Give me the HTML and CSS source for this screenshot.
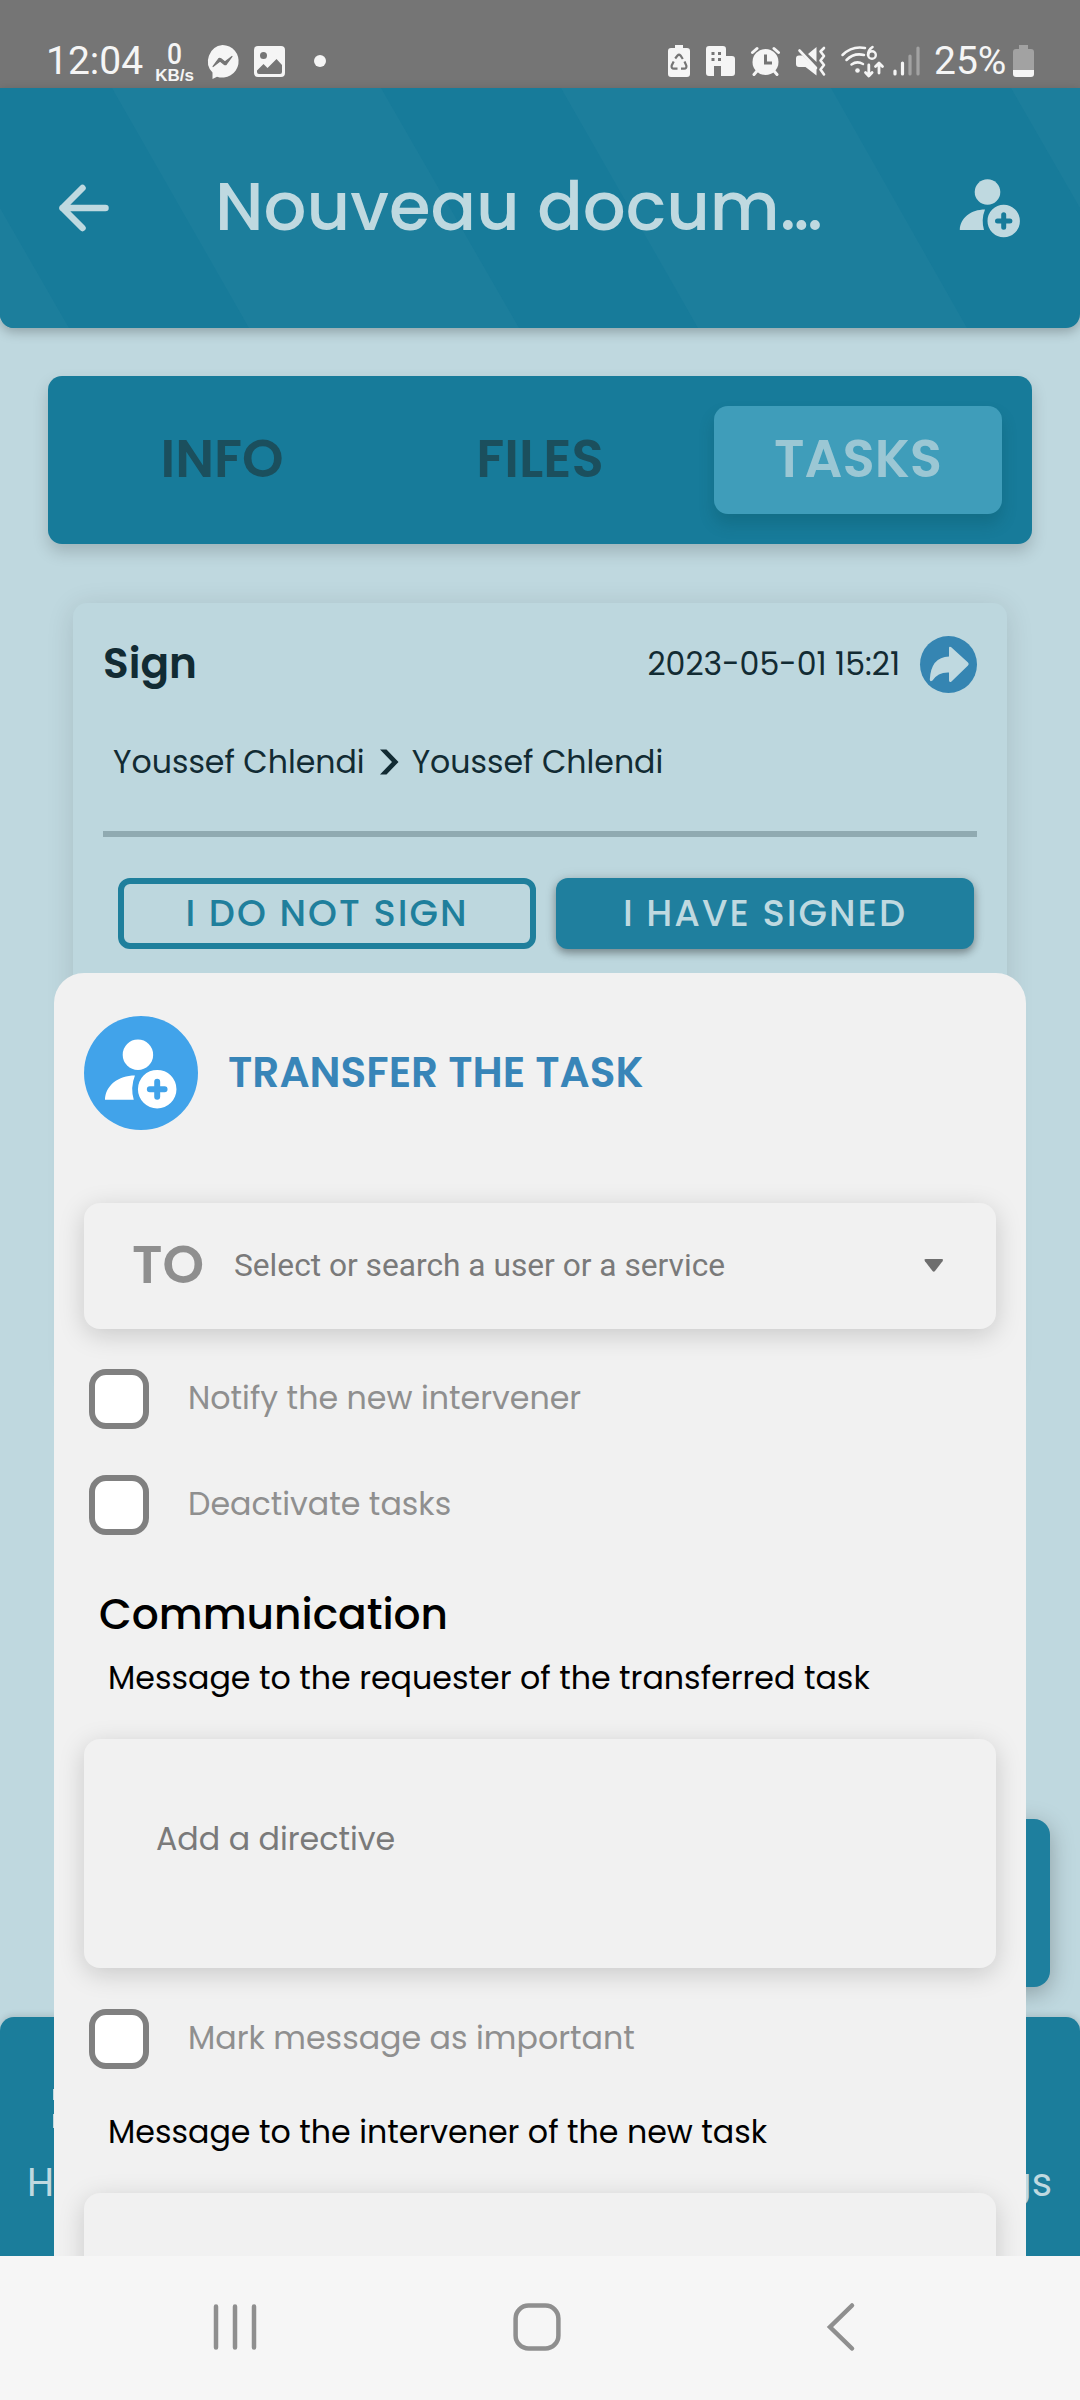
FILE: index.html
```html
<!DOCTYPE html>
<html lang="en">
<head>
<meta charset="utf-8">
<title>Nouveau document</title>
<link rel="stylesheet" href="styles.css">
</head>
<body>
<svg class="defs" aria-hidden="true">
  <symbol id="user-plus" viewBox="0 0 62 60">
    <circle cx="28.5" cy="14" r="12.8"/>
    <path d="M.8 52C1 40 12 31.5 26 31.5Q22 41.500 25 52Z"/>
    <path fill-rule="evenodd" d="M44.700 26.800a16.200 16.200 0 1 1 0 32.400a16.200 16.200 0 1 1 0-32.400ZM42.200 36.700v3.800h-3.700a2.500 2.500 0 0 0 0 5h3.700v3.800a2.500 2.500 0 0 0 5 0v-3.800h3.700a2.500 2.500 0 0 0 0-5h-3.700v-3.800a2.500 2.500 0 0 0-5 0Z"/>
  </symbol>
</svg>
<div class="screen">
  <div class="status">
    <span class="clock">12:04</span>
    <span class="speed"><b class="rate">0</b><b class="unit">KB/s</b></span>
    <svg class="s-messenger" width="33" height="34" viewBox="0 0 33 34"><path fill="#f5f5f5" d="M16.500 1a16.300 16.300 0 1 1-5.500 31.700L6.500 35V28.500A16.300 16.300 0 0 1 16.500 1Z"/><path fill="#757575" stroke="#757575" stroke-width="1.200" stroke-linejoin="round" d="M7 22.500L12.500 15q1-1.200 2.400-.3l4 3.200L26 12.500 20.500 20q-1 1.200-2.400.3l-4-3.200Z"/></svg>
    <svg class="s-image" width="31" height="34" viewBox="0 0 31 34"><path fill="#f5f5f5" fill-rule="evenodd" d="M4 2h23a4 4 0 0 1 4 4v23a4 4 0 0 1-4 4H4a4 4 0 0 1-4-4V6a4 4 0 0 1 4-4ZM9.500 8a3.500 3.500 0 1 0 0 7a3.500 3.500 0 1 0 0-7ZM3 26.500v1.500a2 2 0 0 0 2 2h21a2 2 0 0 0 2-2v-7L22.500 15l-9 9-4-4Z"/></svg>
    <i class="s-dot"></i>
    <span class="s-gap"></span>
    <svg class="s-recycle" width="22" height="34" viewBox="0 0 22 34"><path fill="#f5f5f5" d="M7 1h8v3h4a3 3 0 0 1 3 3v23a3 3 0 0 1-3 3H3a3 3 0 0 1-3-3V7a3 3 0 0 1 3-3h4Z"/><path fill="none" stroke="#757575" stroke-width="2.200" d="M7.200 14.500L9.500 11.500q1.500-1.500 3 0l2.300 3.500M16.500 17.500l1.800 4q.7 3-2.300 3.200h-3M9.500 24.700H6q-3-.2-2.300-3.200l2-4"/></svg>
    <svg class="s-building" width="29" height="34" viewBox="0 0 29 34"><path fill="#f5f5f5" fill-rule="evenodd" d="M3 2h14a3 3 0 0 1 3 3v7h6a3 3 0 0 1 3 3v14a3 3 0 0 1-3 3H15V22H8v10H3a3 3 0 0 1-3-3V5a3 3 0 0 1 3-3ZM5.500 8v3h3V8ZM12 8v3h3V8ZM5.500 14v3h3v-3ZM12 14v3h3v-3Z"/></svg>
    <svg class="s-alarm" width="29" height="34" viewBox="0 0 29 34"><circle cx="14.500" cy="18" r="13" fill="#f5f5f5"/><path fill="none" stroke="#f5f5f5" stroke-width="3" stroke-linecap="round" d="M1.500 8.500l4.500-4M27.500 8.500l-4.500-4M6 27l-3 3.500M23 27l3 3.500"/><path fill="none" stroke="#757575" stroke-width="3" d="M14.500 10.500V19H21"/></svg>
    <svg class="s-mute" width="30" height="34" viewBox="0 0 30 34"><path fill="#f5f5f5" d="M0 14.500a3 3 0 0 1 3-3h3.500L20.500 25v6.500L9.500 23H3a3 3 0 0 1-3-3ZM12 10l8.500-7v15Z"/><path fill="none" stroke="#f5f5f5" stroke-width="2.600" stroke-linecap="round" stroke-linejoin="round" d="M3.500 6.500L20 24M28 4l-3.500 3.500 3.500 4.500-3.500 4.500 3.500 4.500-3.500 4.500 3.500 5"/></svg>
    <svg class="s-wifi" width="43" height="34" viewBox="0 0 43 34"><g fill="none" stroke="#f5f5f5" stroke-linecap="round"><path stroke-width="2.500" d="M1.500 11Q11 1.500 24 4M5.500 16Q13 8.500 23 11M10.500 20.500Q16 16.500 22 20"/><path stroke-width="2.600" d="M31.500 3Q27 6 27 11"/><circle cx="31" cy="11" r="3.800" stroke-width="2.400"/><path stroke-width="2.800" stroke-linejoin="round" d="M27.800 21v10.500M24.500 28.500l3.300 3.500 3.300-3.500M38 29V20M34.500 22.500l3.500-3.500 3.500 3.500"/></g><circle cx="16.500" cy="26.500" r="2.300" fill="#f5f5f5"/></svg>
    <svg class="s-signal" width="27" height="34" viewBox="0 0 27 34"><g stroke-width="3.200" stroke-linecap="round"><path stroke="#f5f5f5" d="M2 27v3M9.500 19v11"/><path stroke="#a2a2a2" d="M17 12v18M25 4v26"/></g></svg>
    <span class="percent">25%</span>
    <svg class="s-battery" width="21" height="34" viewBox="0 0 21 34"><path fill="#a2a2a2" d="M6 1h9v4h3a3 3 0 0 1 3 3v18H0V8a3 3 0 0 1 3-3h3Z"/><path fill="#f5f5f5" d="M0 26h21v4a3 3 0 0 1-3 3H3a3 3 0 0 1-3-3Z"/></svg>
  </div>

  <header class="header">
    <svg class="stripes" width="1080" height="240" viewBox="0 0 1080 240"><path fill="#1c7e9c" d="M0 120L69 240H0ZM112 0H381L519 240H249ZM561 0H831L967 240H698ZM1011 0H1080V120Z"/></svg>
    <svg class="back" width="54" height="52" viewBox="0 0 54 52"><path fill="none" stroke="#bfd9e0" stroke-width="6.500" stroke-linecap="round" stroke-linejoin="round" d="M25.500 6L5.500 26l20 20M5.500 26h43"/></svg>
    <h1 class="title">Nouveau docum…</h1>
    <svg class="add-user" width="62" height="60"><use href="#user-plus"/></svg>
  </header>

  <main class="content">
    <nav class="tabs">
      <span class="tab">INFO</span><span class="tab">FILES</span><span class="tab active">TASKS</span>
    </nav>
    <section class="card">
      <div class="card-head">
        <h2 class="card-title">Sign</h2>
        <span class="date">2023-05-01 15:21</span>
        <svg class="share" width="57" height="57" viewBox="0 0 57 57"><circle cx="28.500" cy="28.500" r="28.500" fill="#3585b2"/><path fill="#bfd9e0" d="M29 12Q29 10 31 11L48 26.500Q49.500 28 48 29.500L31.500 45.500Q29.500 47 29 44.500V36.500Q18 36 12.500 44.500Q10 46.500 9.800 43.500Q11 21 29 20.500Z"/></svg>
      </div>
      <div class="people"><span>Youssef Chlendi</span><svg width="19" height="28" viewBox="0 0 19 28"><path fill="#122b33" d="M0 1.500H6.500L18.500 14 6.500 26.500H0L12 14Z"/></svg><span>Youssef Chlendi</span></div>
      <hr class="rule">
      <div class="actions"><span class="btn outline">I DO NOT SIGN</span><span class="btn solid">I HAVE SIGNED</span></div>
    </section>
    <div class="fab"></div>
    <nav class="bottom">
      <span class="bottom-item"><svg width="50" height="50" viewBox="0 0 50 50"><path fill="none" stroke="#bfd9e0" stroke-width="2" d="M3 1v9h16V1ZM3 26v12h16V26Z"/></svg>Home</span><span class="bottom-item">Settings</span>
    </nav>
  </main>

  <nav class="system">
    <svg class="recents" width="44" height="50" viewBox="0 0 44 50"><path stroke="#8f8f8f" stroke-width="4.500" stroke-linecap="round" d="M3 4.500v41M22 4.500v41M41 4.500v41"/></svg>
    <svg class="home" width="48" height="48" viewBox="0 0 48 48"><rect x="2.600" y="2.600" width="42.800" height="42.800" rx="13" fill="none" stroke="#8f8f8f" stroke-width="4.500"/></svg>
    <svg class="prev" width="30" height="50" viewBox="0 0 30 50"><path fill="none" stroke="#8f8f8f" stroke-width="4.500" stroke-linecap="round" d="M26 3.500L4 25l22 21.500"/></svg>
  </nav>

  <section class="sheet">
    <div class="sheet-head">
      <span class="badge"><svg width="73.800" height="71.400"><use href="#user-plus"/></svg></span>
      <h2 class="sheet-title">TRANSFER THE TASK</h2>
    </div>
    <div class="field select">
      <b class="to">TO</b><span class="placeholder">Select or search a user or a service</span>
      <svg width="20" height="14" viewBox="0 0 20 14"><path fill="#6e6e6e" d="M2 0H17.500Q20 0 18.500 2.200L11 12Q9.800 13.500 8.500 12L1 2.200Q-.5 0 2 0Z"/></svg>
    </div>
    <label class="check first"><i class="box"></i><span>Notify the new intervener</span></label>
    <label class="check second"><i class="box"></i><span>Deactivate tasks</span></label>
    <h3 class="section-title">Communication</h3>
    <p class="caption">Message to the requester of the transferred task</p>
    <div class="field area">Add a directive</div>
    <label class="check third"><i class="box"></i><span>Mark message as important</span></label>
    <p class="caption last">Message to the intervener of the new task</p>
    <div class="field area cut"></div>
  </section>
</div>
</body>
</html>
```
FILE: styles.css
```css
* { box-sizing: border-box; margin: 0; padding: 0; }
body { width: 1080px; height: 2400px; overflow: hidden; font-family: Poppins, Inter, sans-serif; }
svg { display: block; flex: none; overflow: visible; }
.defs { position: absolute; width: 0; height: 0; }
.screen { position: relative; display: flex; flex-direction: column; width: 1080px; height: 2400px; background: #bfd8df; overflow: hidden; }

/* status bar */
.status { display: flex; align-items: flex-start; height: 88px; padding: 44px 46px 0 46px; background: #757575; color: #f5f5f5; font-family: Roboto, sans-serif; }
.clock { width: 109px; font-size: 39px; line-height: 35px; }
.speed { display: flex; flex-direction: column; align-items: center; width: 39px; margin-top: -4px; }
.rate { font-size: 30px; line-height: 27px; font-weight: 500; transform: scaleX(.88); }
.unit { font: bold 17px/17px "Liberation Sans", sans-serif; }
.s-messenger { margin-left: 12px; }
.s-image { margin-left: 15px; }
.s-dot { width: 12px; height: 12px; margin: 11px 0 0 29px; border-radius: 50%; background: #f5f5f5; }
.s-gap { flex: 1; }
.s-building, .s-alarm, .s-mute { margin-left: 16px; }
.s-wifi { margin-left: 15px; }
.s-signal { margin-left: 9px; }
.percent { width: 75px; margin: 0 4px 0 14px; font-size: 39px; line-height: 35px; white-space: nowrap; }

/* header */
.header { position: relative; z-index: 1; display: flex; align-items: center; height: 240px; flex: none; padding: 0 59px 0 57px; background: #177b9a; border-radius: 0 0 14px 14px; box-shadow: 0 4px 12px rgba(0,0,0,.25); }
.stripes { position: absolute; left: 0; top: 0; border-radius: 0 0 14px 14px; overflow: hidden; }
.back { position: relative; }
.title { position: relative; flex: 1; margin: 0 0 2px 104px; color: #bfd9e0; font-size: 67.300px; line-height: 80px; font-weight: 500; white-space: nowrap; }
.add-user { position: relative; fill: #bfd9e0; }

/* tabs */
.content { display: flex; flex-direction: column; height: 1928px; flex: none; padding-top: 48px; }
.tabs { display: grid; grid-template-columns: 1fr 1fr 1fr; gap: 30px; height: 168px; flex: none; margin: 0 48px; padding: 30px; border-radius: 14px; background: #177b9a; box-shadow: 0 8px 16px rgba(0,0,0,.17); }
.tab { height: 108px; border-radius: 14px; color: #1b4f5d; font-size: 52.900px; line-height: 106px; font-weight: 600; text-align: center; }
.tab.active { background: #3f9dba; color: #9bc7d4; box-shadow: 0 10px 16px rgba(0,60,60,.2); }

/* task card */
.card { height: 780px; flex: none; margin: 59px 73px 0; padding: 30px; border-radius: 14px; background: #bdd7de; box-shadow: 0 4px 28px rgba(0,0,0,.12); color: #122b33; }
.card-head { display: flex; align-items: center; height: 62px; }
.card-title { flex: 1; font-size: 42.200px; line-height: 62px; font-weight: 600; }
.date { margin-right: 20px; font-size: 31.600px; line-height: 60px; }
.share { margin-top: 1px; }
.people { display: flex; align-items: center; height: 44px; margin-top: 45px; padding-left: 10px; font-size: 31.600px; line-height: 44px; }
.people svg { margin: 0 13px 0 15px; }
.rule { height: 6px; margin-top: 47px; border: 0; background: #90aab1; }
.actions { display: grid; grid-template-columns: 1fr 1fr; gap: 20px; margin: 41px 3px 0 15px; }
.btn { height: 71px; border-radius: 12px; font-size: 36.800px; font-weight: 500; letter-spacing: 2.050px; text-align: center; white-space: nowrap; }
.outline { border: 6px solid #1f7f9c; color: #1f7f9c; line-height: 58px; }
.solid { background: #1f7f9e; color: #bfd9e0; line-height: 70px; box-shadow: 0 4px 8px rgba(0,0,0,.35), 0 0 14px rgba(0,0,0,.08); }
.fab { width: 168px; height: 168px; flex: none; margin: 436px 30px 0 auto; border-radius: 16px; background: #1e7f9e; box-shadow: 0 6px 24px rgba(0,0,0,.28); }
.bottom { position: relative; display: flex; align-items: flex-end; justify-content: space-between; height: 239px; flex: none; margin-top: 30px; padding: 0 28px 43px 27px; border-radius: 14px 14px 0 0; background: #1b7d9b; box-shadow: 0 -2px 6px rgba(0,0,0,.12); color: #bfd9e0; font-size: 39px; line-height: 60px; }
.bottom-item { display: flex; flex-direction: column; gap: 14px; }
.bottom-item svg { margin-left: 24px; }

/* system navigation */
.system { position: relative; z-index: 3; display: flex; align-items: center; height: 144px; flex: none; padding: 0 224px 2px 213px; background: #f6f6f6; }
.home { margin: 0 auto 0 256px; }

/* transfer sheet, laid over the page */
.sheet { position: absolute; z-index: 2; left: 54px; top: 973px; width: 972px; height: 1283px; padding: 43px 30px 0; border-radius: 30px 30px 0 0; background: #f1f1f1; overflow: hidden; }
.sheet-head { display: flex; align-items: center; height: 114px; }
.badge { width: 114px; height: 114px; padding: 22px 0 0 20px; border-radius: 50%; background: #41a3ea; fill: #fff; }
.sheet-title { margin-left: 30px; color: #3885b8; font-size: 42.200px; line-height: 60px; font-weight: 600; }
.field { border-radius: 16px; background: #f1f1f1; box-shadow: 0 6px 26px rgba(0,0,0,.17); }
.select { display: flex; align-items: center; height: 126px; margin-top: 73px; padding: 0 52px 0 48px; }
.to { width: 102px; margin-bottom: 2px; color: #8f8f8f; font-size: 52.900px; line-height: 80px; font-weight: 600; }
.placeholder { flex: 1; color: #7a7a7a; font: 31.700px/40px Roboto, sans-serif; }
.check { display: flex; align-items: center; height: 60px; padding-left: 5px; color: #8f8f8f; font-size: 31.700px; line-height: 58px; }
.check span { margin-bottom: 3px; }
.box { width: 60px; height: 60px; margin-right: 39px; border: 6px solid #808080; border-radius: 17px; background: #fff; }
.first { margin-top: 40px; }
.second { margin-top: 46px; }
.section-title { height: 60px; margin: 50px 0 0 15px; font-size: 42.300px; line-height: 60px; font-weight: 500; }
.caption { height: 40px; margin: 13px 0 0 24px; font-size: 31.700px; line-height: 40px; white-space: nowrap; }
.area { height: 229px; margin-top: 41px; padding: 80px 72px; color: #7a7a7a; font-size: 31.700px; line-height: 40px; }
.third { margin-top: 41px; }
.last { margin-top: 43px; }
.cut { margin-top: 41px; }
```
